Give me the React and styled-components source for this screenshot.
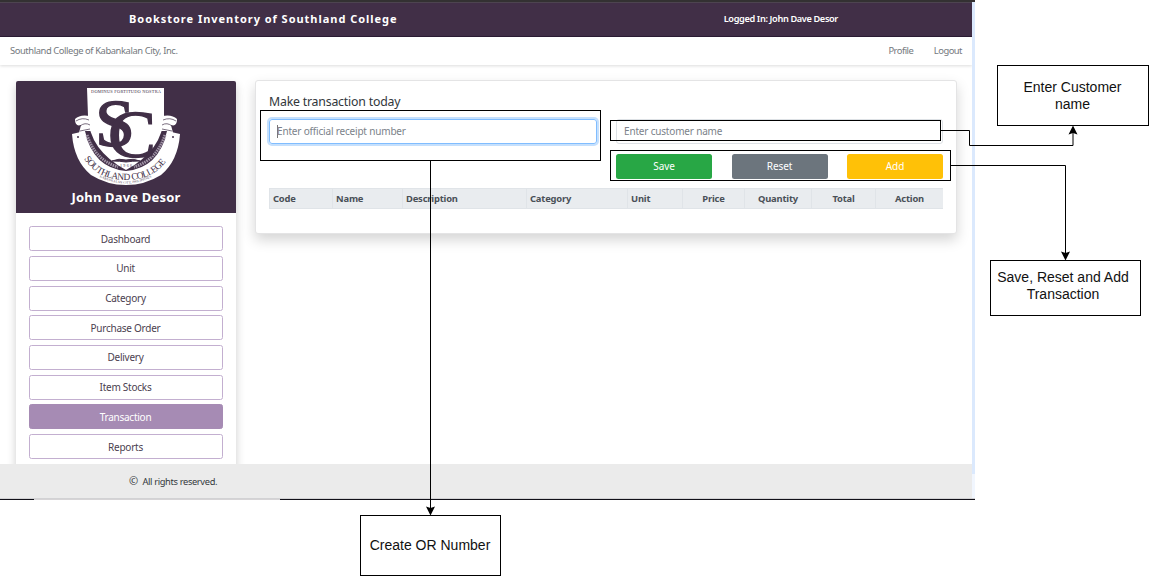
import React from "react";
import styled, { createGlobalStyle } from "styled-components";

const Global = createGlobalStyle`
  * { box-sizing: border-box; }
  body { margin: 0; background: #fff; font-family: "Noto Sans", sans-serif; overflow: hidden; }
`;
const Canvas = styled.div`
  position: relative;
  width: 1149px;
  height: 576px;
`;
const Shot = styled.div`
  width: 975px;
  height: 500px;
  display: flex;
  flex-direction: column;
  border-top: 2px solid #333132;
`;
const Middle = styled.div`
  flex: 1;
  min-height: 0;
  display: flex;
`;
const Page = styled.div`
  flex: 1;
  min-width: 0;
  display: flex;
  flex-direction: column;
  overflow: hidden;
`;
const ScrollEdge = styled.div`
  width: 3px;
  background: linear-gradient(#dbe9fd 472px, #f1f6fe 472px);
`;
const Header = styled.header`
  height: 35px;
  flex: none;
  display: flex;
  align-items: center;
  justify-content: space-between;
  padding: 0 134px 2px 129px;
  background: #412f47;
  border-top: 1px solid #4d4450;
  border-bottom: 1px solid #2c1c35;
  color: #fff;
`;
const Brand = styled.div`
  font-size: 11px;
  font-weight: 700;
  letter-spacing: 0.97px;
  white-space: nowrap;
`;
const User = styled.div`
  font-size: 9.2px;
  font-weight: 600;
  letter-spacing: -0.36px;
  white-space: nowrap;
`;
const Nav = styled.nav`
  height: 28px;
  flex: none;
  display: flex;
  align-items: center;
  padding: 0 10px 2px;
  color: #74797e;
  font-size: 9.4px;
  letter-spacing: -0.4px;
  box-shadow: 0 1px 3px rgba(0, 0, 0, 0.14);
`;
const NavText = styled.span`
  margin-left: ${(p) => (p.$push ? "auto" : `${p.$gap || 0}px`)};
  letter-spacing: ${(p) => (p.$push || p.$gap ? "-0.5px" : "-0.42px")};
`;
const Body = styled.div`
  flex: 1;
  min-height: 0;
  display: flex;
  align-items: flex-start;
  gap: 19px;
  padding: 15px 16px 0;
`;
const Sidebar = styled.aside`
  width: 220px;
  height: 400px;
  flex: none;
  margin-top: 1px;
  border-radius: 3px 3px 0 0;
  background: #fff;
  box-shadow: 0 4px 10px rgba(0, 0, 0, 0.2);
`;
const Profile = styled.div`
  height: 132px;
  display: flex;
  flex-direction: column;
  align-items: center;
  padding-top: 5px;
  border-radius: 2px 2px 0 0;
  background: #412f47;
  color: #fff;
`;
const Crest = styled.svg`
  width: 112px;
  height: 102px;
  flex: none;
`;
const ProfileName = styled.div`
  margin-top: 1px;
  font-size: 13px;
  line-height: 17px;
  font-weight: 700;
  letter-spacing: 0.18px;
`;
const Menu = styled.div`
  display: flex;
  flex-direction: column;
  gap: 4.7px;
  padding: 13.2px 13px 0;
`;
const MenuButton = styled.button`
  height: 25px;
  padding: 0 1px 0 0;
  border: 1px solid ${(p) => (p.$active ? "#a68bb4" : "#c3afd0")};
  border-radius: 2.5px;
  background: ${(p) => (p.$active ? "#a68bb4" : "#fff")};
  color: ${(p) => (p.$active ? "#fff" : "#4b4150")};
  font: 10px/22px "Noto Sans", sans-serif;
  letter-spacing: -0.25px;
`;
const Card = styled.main`
  width: 702px;
  flex: none;
  height: 154px;
  padding: 12px 13px 12px;
  border: 1px solid #e4e4e5;
  border-radius: 3px;
  background: #fff;
  box-shadow: 0 6px 13px rgba(0, 0, 0, 0.17);
`;
const CardTitle = styled.h1`
  margin: 0 0 9px;
  font-size: 12.3px;
  line-height: 17px;
  font-weight: 400;
  letter-spacing: -0.2px;
  color: #32373b;
`;
const Form = styled.div`
  display: grid;
  grid-template-columns: 328px 327px;
  justify-content: space-between;
  row-gap: 10px;
`;
const Field = styled.div`
  display: flex;
  align-items: center;
  height: 25px;
  padding: 0 7px 1px;
  border: 1px solid ${(p) => (p.$focus ? "#80bdff" : "#dde1e5")};
  border-radius: 3px;
  box-shadow: ${(p) => (p.$focus ? "0 0 0 2px #c5e0fd" : "none")};
  color: #7b828a;
  font-size: 10px;
  letter-spacing: -0.18px;
`;
const Caret = styled.span`
  width: 1px;
  height: 13px;
  margin-right: -1px;
  background: #777;
`;
const Buttons = styled.div`
  grid-column: 2;
  display: flex;
  justify-content: space-between;
`;
const Action = styled.button`
  width: 96px;
  height: 25px;
  padding: 0;
  border: 0;
  border-radius: 2.5px;
  background: ${(p) => p.$color};
  color: #fff;
  font: 10px/25px "Noto Sans", sans-serif;
  letter-spacing: -0.1px;
`;
const Table = styled.div`
  display: grid;
  grid-template-columns: 63px 70px 124px 101px 55px 62px 67px 64px 68px;
  height: 21px;
  margin-top: 9px;
  background: #e9ecef;
  border: 1px solid #e0e4e8;
  border-width: 1px 0;
`;
const Th = styled.div`
  padding-left: ${(p) => (p.$center ? 0 : 3)}px;
  text-align: ${(p) => (p.$center ? "center" : "left")};
  border-left: 1px solid #e0e4e8;
  color: #495057;
  font-size: 9.4px;
  line-height: 20px;
  font-weight: 700;
  letter-spacing: -0.18px;
`;
const Footer = styled.footer`
  height: 34px;
  flex: none;
  z-index: 1;
  padding-left: 129px;
  background: #ebebeb;
  color: #33383c;
  font-size: 9.3px;
  line-height: 34px;
  letter-spacing: -0.35px;
  white-space: pre;
`;
const Mark = styled.span`
  font-size: 11px;
  margin-right: 0.5px;
`;
const Taskbar = styled.div`
  height: 2px;
  flex: none;
  border-top: 1px solid #d2d2d4;
  background: linear-gradient(90deg, #111018 34px, #d6d4d6 34px 280px, #111018 280px) border-box;
`;
const Overlay = styled.svg`
  position: absolute;
  inset: 0;
  z-index: 4;
`;
const Note = styled.div`
  position: absolute;
  z-index: 3;
  left: ${(p) => p.$x}px;
  top: ${(p) => p.$y}px;
  width: ${(p) => p.$w}px;
  height: ${(p) => p.$h}px;
  display: flex;
  align-items: center;
  justify-content: center;
  padding: 0 ${(p) => p.$nudge || 0}px ${(p) => p.$lift || 0}px 0;
  border: 1px solid #000;
  background: ${(p) => (p.$clear ? "transparent" : "#fff")};
  color: #111;
  font: 14px/17px "Liberation Sans", sans-serif;
  text-align: center;
  white-space: pre;
`;

function Logo() {
  const ink = "#412f47";
  return (
    <Crest viewBox="0 0 112 102">
      <defs>
        <path id="ribbonArc" d="M8 60 Q20 94 56 94 Q92 94 104 60" />
        <path id="mottoArc" d="M26 89 Q56 106 86 89" />
      </defs>
      <g fill="#fff">
        <path d="M5 33 Q10 28 20 30 L22 49 Q15 52 9 47 L11 39 Q5 41 5 33Z" />
        <path d="M107 33 Q102 28 92 30 L90 49 Q97 52 103 47 L101 39 Q107 41 107 33Z" />
        <path d="M2 48 L15 45 Q23 80 56 83 Q89 80 97 45 L110 48 Q108 75 91 89 Q75 99 56 99 Q37 99 21 89 Q4 75 2 48Z" />
      </g>
      <path d="M15 45 Q23 82 56 85 Q89 82 97 45 L91 45 L21 45Z" fill={ink} />
      <g fill="none" stroke="#a094a6" strokeWidth="3" strokeDasharray="1.6 .8">
        <path d="M17 49 Q25 74 48 81" />
        <path d="M95 49 Q87 74 64 81" />
      </g>
      <path d="M17 2 H94 V30 Q93 64 56 84 Q19 64 18 30Z" fill="#fff" />
      <g fill="none" stroke={ink} strokeWidth=".7">
        <path d="M6 35 Q12 31 19 34 M10 40 Q15 36 20 39 M10 45 L20 43" />
        <path d="M106 35 Q100 31 93 34 M102 40 Q97 36 92 39 M102 45 L92 43" />
      </g>
      <circle cx="8" cy="51" r="1" fill={ink} />
      <circle cx="103" cy="51" r="1" fill={ink} />
      <g fill={ink} fontFamily="Liberation Serif, serif">
        <text x="21" y="7" fontSize="4.4" textLength="70">DOMINUS FORTITUDO NOSTRA</text>
        <text x="25" y="59.500" fontSize="67" textLength="40" lengthAdjust="spacingAndGlyphs" stroke={ink} strokeWidth="1.4">S</text>
        <text x="38" y="70.500" fontSize="67" textLength="48" lengthAdjust="spacingAndGlyphs" stroke={ink} strokeWidth="1.4">C</text>
        <text fontSize="9.5" textLength="95"><textPath href="#ribbonArc" startOffset="14">SOUTHLAND COLLEGE</textPath></text>
        <text x="50" y="81" fontSize="4" textLength="12">1966</text>
        <text fontSize="3.2" textLength="54"><textPath href="#mottoArc" startOffset="4">KABANKALAN CITY, PHILIPPINES</textPath></text>
      </g>
      <path d="M42 75 Q49 72 56 74 Q63 72 70 75 Q62 75 56 76 Q50 75 42 75Z" fill={ink} stroke={ink} />
    </Crest>
  );
}

const menu = ["Dashboard", "Unit", "Category", "Purchase Order", "Delivery", "Item Stocks", "Transaction", "Reports"];
const columns = ["Code", "Name", "Description", "Category", "Unit", "Price", "Quantity", "Total", "Action"];

export default function App() {
  return (
    <Canvas>
      <Global />
      <Shot>
        <Middle>
          <Page>
            <Header>
              <Brand>Bookstore Inventory of Southland College</Brand>
              <User>Logged In: John Dave Desor</User>
            </Header>
            <Nav>
              <NavText>Southland College of Kabankalan City, Inc.</NavText>
              <NavText $push>Profile</NavText>
              <NavText $gap={20.5}>Logout</NavText>
            </Nav>
            <Body>
              <Sidebar>
                <Profile>
                  <Logo />
                  <ProfileName>John Dave Desor</ProfileName>
                </Profile>
                <Menu>
                  {menu.map((m) => (
                    <MenuButton key={m} $active={m === "Transaction"}>{m}</MenuButton>
                  ))}
                </Menu>
              </Sidebar>
              <Card>
                <CardTitle>Make transaction today</CardTitle>
                <Form>
                  <Field $focus><Caret />Enter official receipt number</Field>
                  <Field>Enter customer name</Field>
                  <Buttons>
                    <Action $color="#28a745">Save</Action>
                    <Action $color="#6c757d">Reset</Action>
                    <Action $color="#ffc107">Add</Action>
                  </Buttons>
                </Form>
                <Table>
                  {columns.map((c, i) => (
                    <Th key={c} $center={i > 4}>{c}</Th>
                  ))}
                </Table>
              </Card>
            </Body>
            <Footer><Mark>©</Mark>  All rights reserved.</Footer>
          </Page>
          <ScrollEdge />
        </Middle>
        <Taskbar />
      </Shot>
      <Note $clear $x={260} $y={110} $w={341} $h={51} />
      <Note $clear $x={610} $y={120} $w={331} $h={21} />
      <Note $clear $x={610} $y={150} $w={341} $h={31} />
      <Note $x={997} $y={65} $w={152} $h={61} $nudge={1}>{"Enter Customer\nname"}</Note>
      <Note $x={990} $y={260} $w={151} $h={56} $lift={4} $nudge={5}>{"Save, Reset and Add\nTransaction"}</Note>
      <Note $x={360} $y={515} $w={141} $h={61} $nudge={1}>Create OR Number</Note>
      <Overlay width="1149" height="576" fill="none" stroke="#000">
        <path d="M430.500 161V509" />
        <path d="M941 130.500H969.500V145.500H1073V132" />
        <path d="M951 165.500H1065.500V254" />
        <g fill="#000" stroke="none">
          <path d="M430.500 515.500L426 506.500L430.500 508L435 506.500Z" />
          <path d="M1073 125.500L1068.500 134.500L1073 133L1077.500 134.500Z" />
          <path d="M1065.500 260.500L1061 251.500L1065.500 253L1070 251.500Z" />
        </g>
      </Overlay>
    </Canvas>
  );
}
